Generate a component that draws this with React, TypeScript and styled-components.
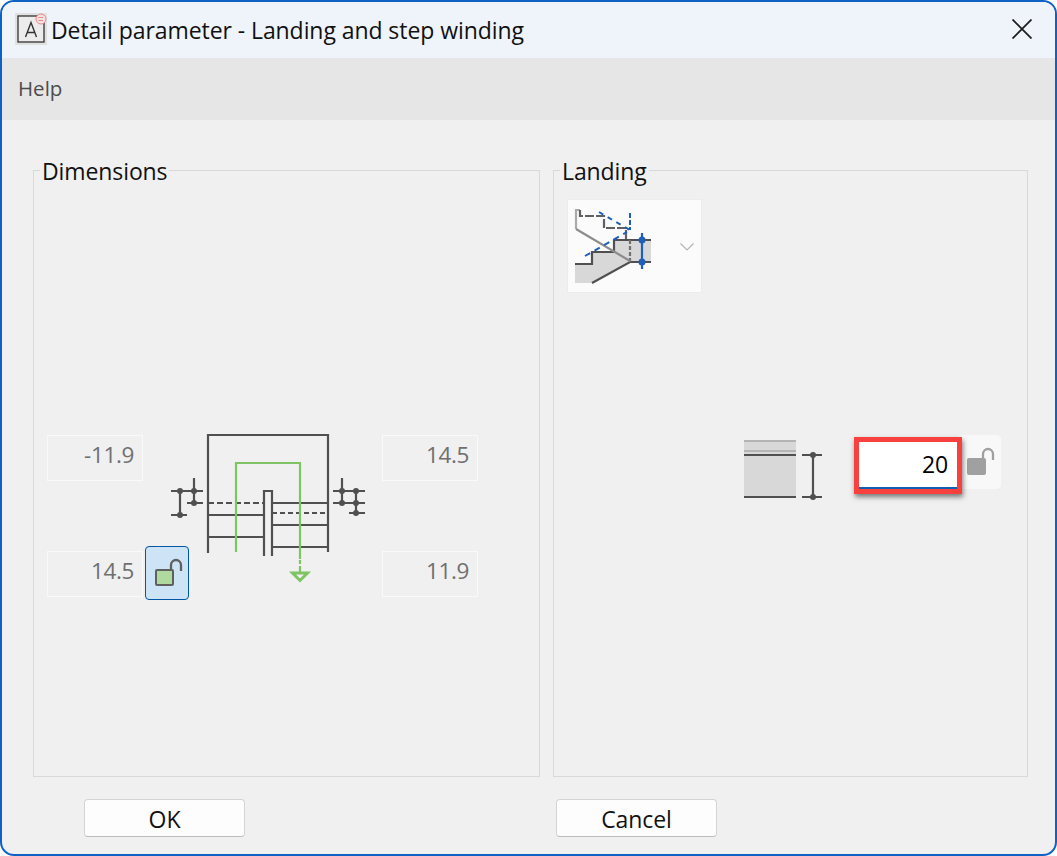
import React from "react";
import styled, { createGlobalStyle } from "styled-components";

const Global = createGlobalStyle`
  html, body { margin: 0; padding: 0; background: #fff; }
  * { box-sizing: border-box; }
`;

const FONT = `"Open Sans", "Noto Sans", "Liberation Sans", sans-serif`;

const Win = styled.div`
  width: 1057px;
  height: 856px;
  display: flex;
  flex-direction: column;
  border: 2px solid #0f62c4;
  border-radius: 14px;
  overflow: hidden;
  background: #f0f0f0;
  font-family: ${FONT};
  color: #111;
`;
const TitleBar = styled.div`
  height: 56px;
  flex: none;
  display: flex;
  align-items: center;
  padding: 0 23px 0 13px;
  background: #eff4fa;
`;
const AppIcon = styled.svg`
  width: 34px;
  height: 34px;
  flex: none;
  margin-top: -2px;
`;
const Title = styled.div`
  flex: 1;
  margin-left: 2px;
  font-size: 23px;
  letter-spacing: -0.07px;
  white-space: nowrap;
`;
const CloseIcon = styled.svg`
  width: 20px;
  height: 20px;
  flex: none;
  margin-top: -2px;
`;
const MenuBar = styled.div`
  height: 62px;
  flex: none;
  display: flex;
  align-items: center;
  padding: 0 0 2px 16px;
  background: #e6e6e6;
  font-size: 20.5px;
  color: #4c4c4c;
`;
const Content = styled.div`
  flex: 1;
  display: grid;
  grid-template-columns: 507px 475px;
  grid-template-rows: 621px auto;
  column-gap: 13px;
  row-gap: 22px;
  padding: 36px 27px 0 31px;
`;
const Group = styled.fieldset`
  margin: 0;
  padding: 0;
  min-width: 0;
  border: 1px solid #d9d9d9;
`;
const Legend = styled.legend`
  margin-left: 6px;
  padding: 0 2px;
  height: 28px;
  line-height: 31px;
  font-size: 23px;
  letter-spacing: -0.1px;
`;
const DimGrid = styled.div`
  display: grid;
  grid-template-columns: 96px 239px 96px;
  grid-template-rows: 46px 70px 46px;
  margin: 251px 0 0 13px;
`;
const ReadOut = styled.div<{ $col: number; $row: number }>`
  grid-column: ${(p) => p.$col};
  grid-row: ${(p) => p.$row};
  display: flex;
  align-items: center;
  justify-content: flex-end;
  padding: 0 8px 7px 0;
  border: 1px solid #f9f9f9;
  font-size: 22.5px;
  letter-spacing: -0.35px;
  color: #6f6f6f;
`;
const Drawing = styled.svg`
  grid-column: 2;
  grid-row: 1 / span 3;
  margin-top: -5px;
`;
const LockButton = styled.div<{ $active?: boolean }>`
  width: 44px;
  height: 54px;
  flex: none;
  border-radius: 4px;
  border: 1px solid ${(p) => (p.$active ? "#0056a3" : "#f8f8f8")};
  background: ${(p) => (p.$active ? "#cde4f7" : "#f8f8f8")};
`;
const LockSlot = styled.div`
  grid-column: 2;
  grid-row: 3;
  margin: -5px 0 0 2px;
  position: relative;
`;
const Combo = styled.div`
  width: 135px;
  height: 94px;
  margin: 15px 0 0 13px;
  background: #fbfbfb;
  border: 1px solid #ececec;
`;
const ComboArt = styled.svg`
  display: block;
`;
const LandingRow = styled.div`
  display: flex;
  align-items: flex-start;
  margin: 142px 0 0 188px;
`;
const LandingArt = styled.svg`
  flex: none;
  margin-top: 3px;
`;
const Field = styled.div`
  position: relative;
  z-index: 1;
  width: 108px;
  height: 57px;
  flex: none;
  margin: 2px -5px 0 30px;
  padding: 0 9px 4px 0;
  display: flex;
  align-items: center;
  justify-content: flex-end;
  background: #fff;
  border: 5px solid #f8403f;
  box-shadow: 1px 3px 5px rgba(0, 0, 0, 0.5);
  font-size: 23px;
  letter-spacing: -0.2px;
  color: #000;
  &::after {
    content: "";
    position: absolute;
    left: 0;
    right: 0;
    bottom: 0;
    height: 2px;
    background: #0f5fb3;
  }
`;
const Action = styled.button<{ $left: number }>`
  width: 161px;
  height: 38px;
  margin-left: ${(p) => p.$left}px;
  padding: 1px 0 0;
  background: #fdfdfd;
  border: 1px solid #d4d4d4;
  border-bottom-color: #bdbdbd;
  border-radius: 4px;
  font-family: ${FONT};
  font-size: 23px;
  letter-spacing: -0.1px;
  color: #111;
`;

const Lock = ({ fill, stroke }: { fill: string; stroke: string }) => (
  <svg width="42" height="52" viewBox="0 0 42 52" fill="none" style={{ display: "block" }}>
    <rect x="10" y="23" width="17" height="15" rx="1" fill={fill} stroke={stroke} strokeWidth="2" />
    <path d="M25 23V18a5 5 0 0 1 10 0v6" stroke={stroke} strokeWidth="2.3" />
  </svg>
);

const Dot = ({ x, y, c = "#505050", r = 3 }: { x: number; y: number; c?: string; r?: number }) => (
  <circle cx={x} cy={y} r={r} fill={c} stroke="none" />
);

const Stair = () => (
  <Drawing width="239" height="160" viewBox="143 430 239 160" fill="none" stroke="#505050" strokeWidth="2.2">
    <path d="M208 553V435H328V552" />
    <path d="M208 503H263" strokeDasharray="6 3" />
    <path d="M208 515H264M208 537H264" />
    <path d="M264 556V491H272V556" />
    <path d="M272 503H328M272 525H328M272 547H328" />
    <path d="M272 513H328" strokeDasharray="5 3" />
    <path d="M171 491H203M180 491V515M171 515H187M194 478V503M187 503H203" />
    <Dot x={180} y={491} />
    <Dot x={194} y={491} />
    <Dot x={180} y={515} />
    <Dot x={194} y={503} />
    <path d="M342 478V503M356 491V513M333 491H365M333 503H365M349 513H365" />
    <Dot x={342} y={491} />
    <Dot x={356} y={491} />
    <Dot x={342} y={503} />
    <Dot x={356} y={503} />
    <Dot x={356} y={513} />
    <g stroke="#7fc364">
      <path d="M236 552V463H300V559" />
      <path d="M300 560V564M300 566V573" />
      <path d="M292.5 573H307.5L300 580.5Z" strokeWidth="3" />
    </g>
  </Drawing>
);

const ComboIcon = () => (
  <ComboArt width="133" height="92" viewBox="568 200 133 92" fill="none">
    <path d="M575 264H592V252H614V240H651V262H630L592 283H575Z" fill="#d8d8d8" />
    <path d="M575 264H592V252H614V240H651" stroke="#505050" strokeWidth="2.2" />
    <path d="M592 283L630 262H651" stroke="#505050" strokeWidth="2.2" />
    <path d="M630 240V262" stroke="#707070" strokeWidth="2.2" strokeDasharray="4 2" />
    <path d="M580 210H576V229" stroke="#aaa" strokeWidth="2.2" />
    <path d="M580 210V216H604V228H626V240" stroke="#606060" strokeWidth="2.2" strokeDasharray="9 2" />
    <path d="M576 229L630 261" stroke="#8c8c8c" strokeWidth="2.2" />
    <path d="M630 213V230" stroke="#1f5fb8" strokeWidth="2" strokeDasharray="5 2" />
    <path d="M599 212L630 230" stroke="#1f5fb8" strokeWidth="2" strokeDasharray="5 5" />
    <path d="M585 256L627 232" stroke="#1f5fb8" strokeWidth="2" strokeDasharray="6 5" />
    <path d="M642 233V269" stroke="#1f5fb8" strokeWidth="2.2" />
    <Dot x={642} y={240} c="#1f5fb8" r={3.5} />
    <Dot x={642} y={262} c="#1f5fb8" r={3.5} />
    <path d="M680.5 243.5L687 250L693.5 243.5" stroke="#b5b5b5" strokeWidth="1.2" />
  </ComboArt>
);

const LandingIcon = () => (
  <LandingArt width="82" height="62" viewBox="742 438 82 62" fill="none">
    <rect x="744" y="440" width="52" height="57" fill="#d8d8d8" />
    <path d="M744 441H796M744 451H796" stroke="#b4b4b4" strokeWidth="2" />
    <path d="M744 455H796M744 497H796M802 455H822M802 497H822M813 455V497" stroke="#505050" strokeWidth="2.2" />
    <Dot x={813} y={455} />
    <Dot x={813} y={497} />
  </LandingArt>
);

export default function App() {
  return (
    <>
      <Global />
      <Win>
        <TitleBar>
          <AppIcon viewBox="0 0 34 34" fill="none">
            <rect width="32" height="32" y="1" fill="#e0e0e0" />
            <rect x="3" y="4" width="26" height="26" fill="#ececec" stroke="#333" strokeWidth="1.3" />
            <path d="M10.5 25L16 10.5L21.5 25M12.5 20.5H19.5" stroke="#333" strokeWidth="1.4" />
            <circle cx="26" cy="7" r="5" fill="#f6e4e4" stroke="#e88" strokeWidth="1" />
            <path d="M23.5 5.5H28M23.5 8.5H28" stroke="#e88" strokeWidth="1" />
          </AppIcon>
          <Title>Detail parameter - Landing and step winding</Title>
          <CloseIcon viewBox="0 0 20 20" fill="none">
            <path d="M0.5 0.5L19.5 19.5M19.5 0.5L0.5 19.5" stroke="#1e1e1e" strokeWidth="1.8" />
          </CloseIcon>
        </TitleBar>
        <MenuBar>Help</MenuBar>
        <Content>
          <Group>
            <Legend>Dimensions</Legend>
            <DimGrid>
              <ReadOut $col={1} $row={1}>-11.9</ReadOut>
              <ReadOut $col={3} $row={1}>14.5</ReadOut>
              <ReadOut $col={1} $row={3}>14.5</ReadOut>
              <ReadOut $col={3} $row={3}>11.9</ReadOut>
              <Stair />
              <LockSlot>
                <LockButton $active>
                  <Lock fill="#b0d9a0" stroke="#606060" />
                </LockButton>
              </LockSlot>
            </DimGrid>
          </Group>
          <Group>
            <Legend>Landing</Legend>
            <Combo>
              <ComboIcon />
            </Combo>
            <LandingRow>
              <LandingIcon />
              <Field>20</Field>
              <LockButton>
                <Lock fill="#a0a0a0" stroke="#a0a0a0" />
              </LockButton>
            </LandingRow>
          </Group>
          <div>
            <Action $left={51}>OK</Action>
          </div>
          <div>
            <Action $left={3}>Cancel</Action>
          </div>
        </Content>
      </Win>
    </>
  );
}
